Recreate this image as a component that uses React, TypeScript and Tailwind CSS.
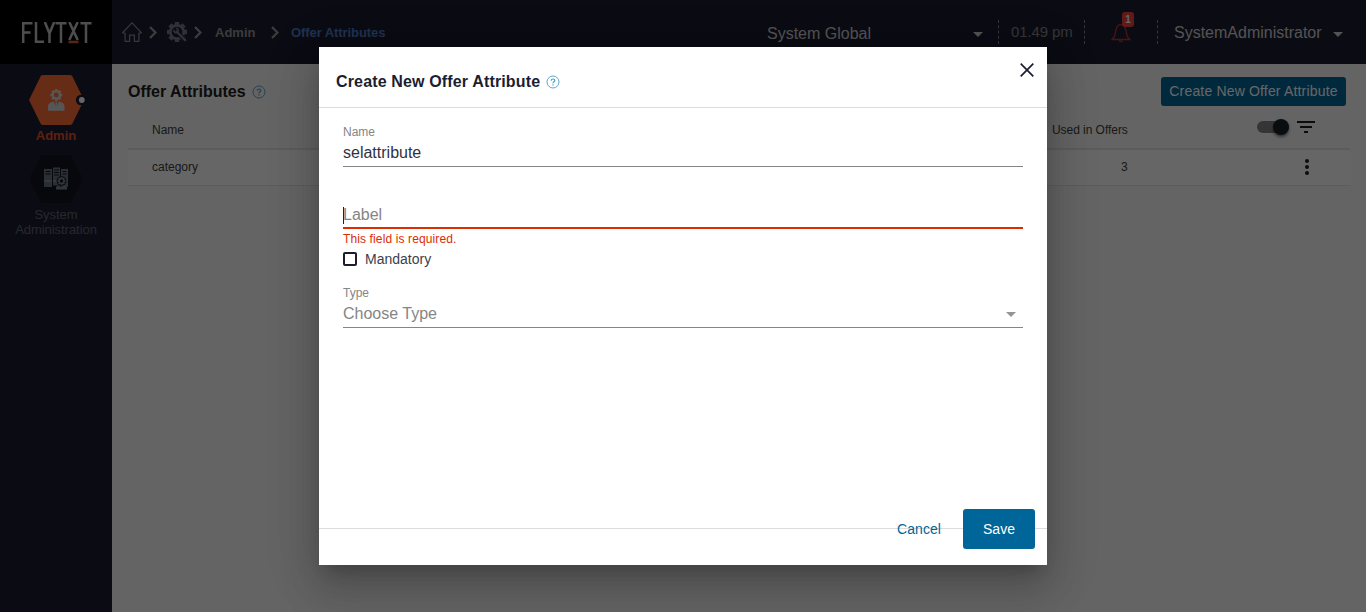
import React from 'react';

const font = "font-['Liberation_Sans',Arial,sans-serif]";

function Chevron() {
  return (
    <svg width="8" height="13" viewBox="0 0 8 13" fill="none" stroke="#9a9a9a" strokeWidth="2.2">
      <path d="M1 1l5.5 5.5L1 12" />
    </svg>
  );
}

function Caret({ className }: { className: string }) {
  return (
    <svg width="10" height="5" viewBox="0 0 10 5" className={className}>
      <path d="M0 0h10L5 5z" fill="currentColor" />
    </svg>
  );
}

function Help({ className }: { className: string }) {
  return (
    <svg width="14" height="14" viewBox="0 0 14 14" fill="none" stroke="currentColor" className={className}>
      <circle cx="7" cy="7" r="6" strokeWidth="0.9" />
      <path d="M5.2 5.7c0-2.3 3.6-2.2 3.6-.2 0 1.300-1.800 1.300-1.800 2.700M7 9.300v1.200" strokeWidth="1.2" />
    </svg>
  );
}

function GearShape({ cx, cy, r, color, hole }: { cx: number; cy: number; r: number; color: string; hole: string }) {
  const teeth = [0, 45, 90, 135];
  return (
    <g>
      {teeth.map((a) => (
        <rect
          key={a}
          x={cx - r * 0.22}
          y={cy - r}
          width={r * 0.44}
          height={r * 2}
          fill={color}
          transform={`rotate(${a} ${cx} ${cy})`}
        />
      ))}
      <circle cx={cx} cy={cy} r={r * 0.8} fill={color} />
      <circle cx={cx} cy={cy} r={r * 0.42} fill={hole} />
    </g>
  );
}

function Logo() {
  return (
    <svg width="70" height="22" viewBox="0 0 70 22" fill="none" stroke="#c4c4c4" strokeWidth="2.500">
      <path d="M1.200 21V1.200h9.300M1.200 10.500h7.300M14 0v19.800h8M22.800 0l4.700 11.500V21M32.200 0l-4.700 11.500M33.500 1.200h11M39 1v20M47.300 0l8.400 18M55.700 0l-8.400 18M58.500 1.200h11M64 1v20" />
      <path d="M46.500 20h10" stroke="#d5652d" />
    </svg>
  );
}

function HomeIcon() {
  return (
    <svg width="20" height="20" viewBox="0 0 20 20" fill="none" stroke="#858b9e" strokeWidth="1.200">
      <path d="M.8 10.500L10 .900l9.200 9.600-1.200.9h-1.100v7.900h-4.500v-6.100H7.600v6.100H3.100v-7.900H2z" />
    </svg>
  );
}

function GearWrench() {
  return (
    <svg width="21" height="21" viewBox="0 0 21 21">
      <GearShape cx={10} cy={10} r={10} color="#757a8c" hole="#1c1e30" />
      <circle cx="10" cy="10" r="5.300" fill="#1c1e30" />
      <path d="M12 12l7 7" stroke="#1c1e30" strokeWidth="4.500" />
      <path d="M9.500 9.500l8.700 8.700" stroke="#757a8c" strokeWidth="2.400" strokeLinecap="round" />
      <path d="M6.800 7.800a2.400 2.400 0 0 0 3.800 2.400 2.400 2.400 0 0 0-1.700-4" fill="none" stroke="#757a8c" strokeWidth="1.500" />
    </svg>
  );
}

function AdminTile() {
  return (
    <svg width="58" height="50" viewBox="0 0 58 50" className="block">
      <path d="M15 0h27q1.500 0 2.300 1.300L56 25 44.300 48.700Q43.500 50 42 50H15q-1.500 0-2.300-1.300L1 25 12.700 1.300Q13.500 0 15 0z" fill="#ff6e35" />
      <circle cx="53" cy="25" r="5.200" fill="#1c1e30" />
      <circle cx="53.800" cy="25" r="2.900" fill="#fff" />
      <GearShape cx={28.300} cy={20} r={5.900} color="#d8d8d8" hole="#ff6e35" />
      <path d="M20 35.700v-4.200q0-3.500 3.800-4.300l2-.7 2.500 7 2.500-7 2 .7q3.700.8 3.700 4.300v4.200z" fill="#d8d8d8" />
      <path d="M27.200 26.700h2.200l-.5 1.800.8 5-1.400 1.700-1.400-1.700.8-5z" fill="#d8d8d8" />
    </svg>
  );
}

function SystemTile() {
  return (
    <svg width="54" height="48" viewBox="0 0 54 48" className="block">
      <path d="M14 0h26q1.500 0 2.300 1.300L54 24 42.300 46.700Q41.500 48 40 48H14q-1.500 0-2.300-1.300L0 24 11.700 1.300Q12.500 0 14 0z" fill="#13161f" />
      <path d="M15 14h8v18h-8zM24 12.500h7v18h-7zM32 14h7v18h-7z" fill="#68757f" />
      <path d="M16.500 16.500h5M16.500 19h5M25 15h5M25 17.500h5M25 20h5M33.500 16.500h4M33.500 19h4" stroke="#13161f" strokeWidth="1" />
      <path d="M15 26h8M24 26h3" stroke="#84919b" strokeWidth="2" />
      <circle cx="32.500" cy="26" r="4.800" fill="#13161f" />
      <GearShape cx={32.500} cy={26} r={4} color="#7a8790" hole="#13161f" />
      <path d="M27 34.500v-1.500q0-2 3-2.500l2.500 2 2.500-2q3 .5 3 2.500v1.500z" fill="#7a8790" />
    </svg>
  );
}

function Bell() {
  return (
    <div className="relative ml-[26px] mt-[11px] h-[33px] w-[23px]">
      <svg width="20" height="22" viewBox="0 0 20 22" fill="none" stroke="#b93034" strokeWidth="1.300" className="mt-[11px]">
        <path d="M1 17.500l2.500-3L5 8C6 .8 13.500.8 14.800 8l1.500 6.500 2.500 3zM8.200 17.800c0 2.400 3.500 2.400 3.500 0" />
      </svg>
      <span className="absolute left-[11px] top-px flex h-[15px] w-3 items-center justify-center rounded-[3px] bg-[#f53f3f] text-[10px] font-bold text-white">
        1
      </span>
    </div>
  );
}

function Divider({ className }: { className: string }) {
  return <div className={`mt-5 h-6 w-0 border-l border-dashed border-[#858585] ${className}`} />;
}

function Header() {
  return (
    <header className="flex h-16 bg-[#1c1e30]">
      <div className="flex h-16 w-28 shrink-0 items-start bg-black pl-[22px] pt-[22px]">
        <Logo />
      </div>
      <nav className="flex h-16 w-[655px] shrink-0 items-center pl-[10px] text-[13px] font-bold">
        <HomeIcon />
        <div className="ml-[7px] flex"><Chevron /></div>
        <div className="ml-[10px] flex"><GearWrench /></div>
        <div className="ml-[6px] flex"><Chevron /></div>
        <span className="ml-[13px] w-[56px] pt-px text-[#949494]">Admin</span>
        <Chevron />
        <span className="ml-[12px] pt-px tracking-[-0.08px] text-[#4e7cc4]">Offer Attributes</span>
      </nav>
      <div className="flex w-[231px] items-start justify-between pr-[15px]">
        <span className="mt-[24px] text-[16px] leading-5 text-[#d0d0d0]">System Global</span>
        <Caret className="mt-8 text-[#d0d0d0]" />
      </div>
      <Divider className="" />
      <span className="ml-[12px] mt-[22px] w-[73px] whitespace-nowrap text-[15px] leading-5 tracking-[-0.1px] text-[#858585]">01.49 pm</span>
      <Divider className="" />
      <Bell />
      <Divider className="ml-[23px]" />
      <span className="ml-4 mt-[23px] w-[159px] text-[16px] leading-5 text-[#d0d0d0]">SystemAdministrator</span>
      <Caret className="mt-8 text-[#d0d0d0]" />
    </header>
  );
}

function Sidebar() {
  return (
    <aside className="flex w-28 shrink-0 flex-col items-center bg-[#1c1e30] pt-[11px]">
      <div className="ml-[2px]"><AdminTile /></div>
      <span className="mt-px text-[13px] font-bold leading-5 text-[#e8502c]">Admin</span>
      <div className="mt-[9px]"><SystemTile /></div>
      <span className="mt-1 text-center text-[13px] leading-[15px] tracking-[-0.05px] text-[#5c6670]">
        System<br />Administration
      </span>
    </aside>
  );
}

function Content() {
  return (
    <main className="flex flex-1 flex-col bg-[#fafafa] pl-4 pr-4 text-[#202020]">
      <div className="flex h-[46px] items-start justify-between pr-1 pt-[13px]">
        <div className="flex items-center pt-[5px]">
          <h1 className="text-[16px] font-bold leading-5">Offer Attributes</h1>
          <Help className="ml-[6px] text-[#4d9cc4]" />
        </div>
        <button className="flex h-[29px] w-[185px] items-center justify-center whitespace-nowrap rounded-[3px] bg-[#006699] text-[14px] tracking-[0.17px] text-white">
          Create New Offer Attribute
        </button>
      </div>
      <div className="flex h-10 items-center border-b-2 border-[#e5e5e5] pl-6 text-[12px] text-[#404040]">
        <span className="w-[900px] pt-[2px]">Name</span>
        <span className="w-[205px] pt-[2px] tracking-[-0.05px]">Used in Offers</span>
        <div className="-mt-[5px] flex h-3 w-8 items-center justify-end rounded-full bg-[#858585]">
          <span className="h-4 w-4 shrink-0 rounded-full bg-[#1b2126] shadow-[0_2px_3px_rgba(0,0,0,0.5)]" />
        </div>
        <svg width="18" height="12" viewBox="0 0 18 12" className="-mt-[4px] ml-2" fill="#202020">
          <path d="M0 0h18v2H0zM3 5h12v2H3zM7 10h4v2H7z" />
        </svg>
      </div>
      <div className="flex h-9 items-center border-b border-[#e5e5e5] bg-white pb-[2px] pl-6 text-[12px] text-[#404040]">
        <span className="w-[969px]">category</span>
        <span className="w-[184px]">3</span>
        <svg width="4" height="16" viewBox="0 0 4 16" fill="#202020">
          <circle cx="2" cy="2" r="2" /><circle cx="2" cy="8" r="2" /><circle cx="2" cy="14" r="2" />
        </svg>
      </div>
    </main>
  );
}

function Dialog() {
  return (
    <div className="flex h-[518px] w-[728px] flex-col bg-white text-[#1b1e30] shadow-[0_11px_15px_-7px_rgba(0,0,0,0.2),0_24px_38px_3px_rgba(0,0,0,0.14),0_9px_46px_8px_rgba(0,0,0,0.12)]">
      <div className="flex h-[61px] shrink-0 items-start border-b border-[#dcdcdc] pl-[17px] pr-[13px]">
        <h2 className="mt-[25px] text-[16px] font-bold leading-5 tracking-[0.15px]">Create New Offer Attribute</h2>
        <Help className="ml-[6px] mt-[28px] text-[#4d9cc4]" />
        <svg width="14" height="14" viewBox="0 0 14 14" className="ml-auto mt-4" stroke="#1b1e30" strokeWidth="1.700">
          <path d="M.7.7l12.600 12.600M13.300.7L.7 13.300" />
        </svg>
      </div>
      <div className="flex flex-1 flex-col px-6 pt-[17px]">
        <label className="text-[12px] leading-[14px] text-[#858585]">Name</label>
        <div className="h-[28px] border-b border-[#858585] pt-1 text-[16px] leading-5 text-[#30323f]">selattribute</div>
        <div className="mt-[38px] flex h-6 items-start border-b-2 border-[#dd2c00] text-[16px] leading-5 text-[#858585]">
          <span className="mt-[2px] h-[17px] w-px bg-[#1b1e30]" />
          <span className="-ml-px">Label</span>
        </div>
        <p className="mt-[3px] text-[12px] leading-[14px] tracking-[0.12px] text-[#dd2c00]">This field is required.</p>
        <div className="mt-[4px] flex h-[18px] items-center">
          <span className="h-[14px] w-[14px] rounded-[2px] border-2 border-[#1b1e30]" />
          <span className="ml-2 text-[14px] text-[#3c3e4c]">Mandatory</span>
        </div>
        <label className="mt-[18px] text-[12px] leading-[14px] text-[#858585]">Type</label>
        <div className="flex h-[28px] items-start justify-between border-b border-[#858585] pr-[7px] pt-1 text-[16px] leading-5 text-[#858585]">
          <span>Choose Type</span>
          <Caret className="mt-2 text-[#949494]" />
        </div>
      </div>
      <div className="flex h-[56px] shrink-0 items-center bg-[linear-gradient(#dcdcdc,#dcdcdc)] bg-[length:100%_1px] bg-[position:0_19px] bg-no-repeat pb-4 pr-3">
        <button className="ml-auto text-[14px] tracking-[0.05px] text-[#006699]">Cancel</button>
        <button className="ml-[22px] h-10 w-[72px] rounded-[3px] bg-[#006699] text-[14px] text-white">Save</button>
      </div>
    </div>
  );
}

export default function App() {
  return (
    <div className={`relative h-[612px] w-[1366px] overflow-hidden ${font}`}>
      <div className="flex h-full flex-col">
        <Header />
        <div className="flex flex-1">
          <Sidebar />
          <Content />
        </div>
      </div>
      <div className="absolute inset-0 flex items-center justify-center bg-black/60">
        <Dialog />
      </div>
    </div>
  );
}
